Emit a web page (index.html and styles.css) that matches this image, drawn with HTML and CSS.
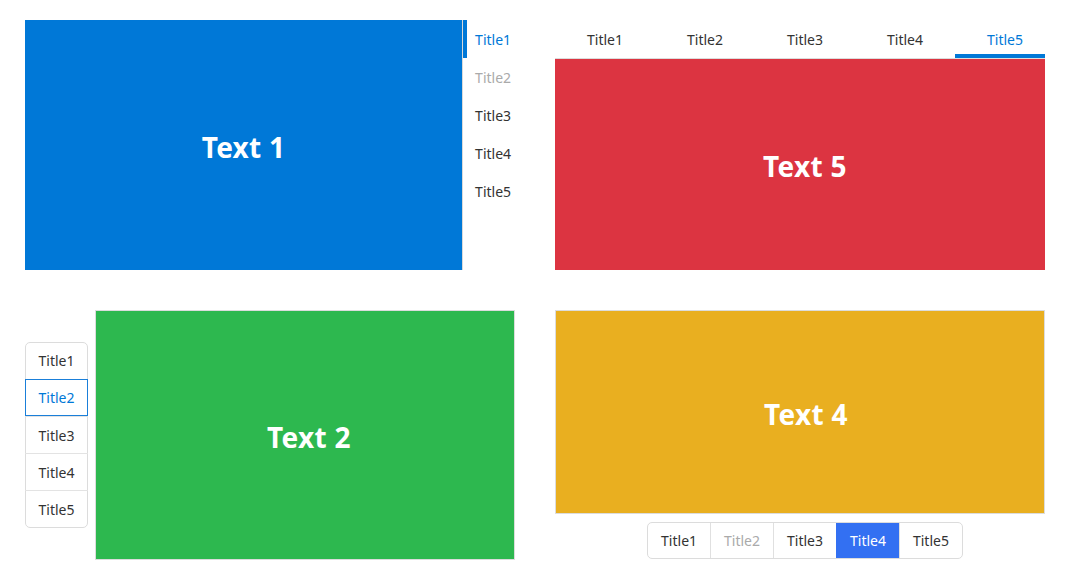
FILE: index.html
```html
<!DOCTYPE html>
<html>
<head>
<meta charset="utf-8">
<link rel="stylesheet" href="styles.css">
</head>
<body>
<div class="grid">
  <section class="cell side-right">
    <div class="pane blue"><div class="inner"><span class="big">Text 1</span></div></div>
    <div class="vtabs">
      <div class="vtab active">Title1</div>
      <div class="vtab disabled">Title2</div>
      <div class="vtab">Title3</div>
      <div class="vtab">Title4</div>
      <div class="vtab">Title5</div>
    </div>
  </section>
  <section class="cell top-tabs">
    <div class="htabs">
      <div class="htab">Title1</div>
      <div class="htab">Title2</div>
      <div class="htab">Title3</div>
      <div class="htab">Title4</div>
      <div class="htab active">Title5</div>
    </div>
    <div class="pane red"><div class="inner wide"><span class="big">Text 5</span></div></div>
  </section>
  <section class="cell side-left">
    <div class="vseg">
      <div class="vseg-item">Title1</div>
      <div class="vseg-item active">Title2</div>
      <div class="vseg-item">Title3</div>
      <div class="vseg-item">Title4</div>
      <div class="vseg-item">Title5</div>
    </div>
    <div class="pane green bordered"><div class="inner shifted"><span class="big">Text 2</span></div></div>
  </section>
  <section class="cell bottom-seg">
    <div class="pane yellow bordered"><div class="inner wide"><span class="big">Text 4</span></div></div>
    <div class="hseg-wrap">
      <div class="hseg">
        <div class="hseg-item">Title1</div>
        <div class="hseg-item disabled">Title2</div>
        <div class="hseg-item">Title3</div>
        <div class="hseg-item active">Title4</div>
        <div class="hseg-item">Title5</div>
      </div>
    </div>
  </section>
</div>
</body>
</html>
```
FILE: styles.css
```css
html, body {
  margin: 0;
  padding: 0;
  background: #fff;
}
body {
  font-family: "Noto Sans", "Open Sans", sans-serif;
  font-size: 14px;
  color: #333;
}
.grid {
  display: grid;
  grid-template-columns: 490px 490px;
  grid-template-rows: 250px 250px;
  column-gap: 40px;
  row-gap: 40px;
  padding: 20px 0 0 25px;
}
.cell {
  overflow: hidden;
  display: flex;
}
.pane {
  overflow: hidden;
  display: flex;
  box-sizing: border-box;
}
.inner {
  flex: 1 0 auto;
  display: flex;
  align-items: center;
  justify-content: center;
  padding-top: 3px;
  box-sizing: border-box;
}
.inner.wide {
  width: 500px;
  flex: 0 0 500px;
}
.inner.shifted {
  padding-left: 8px;
}
.big {
  color: #fff;
  font-weight: 700;
  font-size: 28px;
  letter-spacing: 0.3px;
}
.blue { background: #0078d7; }
.red { background: #dc3441; }
.green { background: #2db84f; }
.yellow { background: #e9af20; }
.bordered { border: 1px solid #dcdcdc; }

/* panel 1 */
.side-right { flex-direction: row; }
.side-right .pane { width: 438px; height: 250px; }
.vtabs {
  width: 52px;
  border-left: 1px solid #d9d9d9;
  display: flex;
  flex-direction: column;
}
.vtab {
  height: 38px;
  line-height: 40px;
  padding-left: 12px;
  white-space: nowrap;
}
.vtab.active {
  color: #0078d7;
  border-left: 4px solid #0078d7;
  padding-left: 8px;
}
.vtab.disabled { color: #aaa; }

/* panel 5 */
.top-tabs { flex-direction: column; }
.htabs {
  display: flex;
  height: 38px;
  border-bottom: 1px solid #dcdcdc;
  flex: 0 0 auto;
}
.htab {
  flex: 0 0 100px;
  text-align: center;
  line-height: 40px;
  box-sizing: border-box;
  height: 38px;
}
.htab.active {
  color: #0078d7;
  border-bottom: 4px solid #0078d7;
}
.top-tabs .pane { flex: 1; }

/* panel 2 */
.side-left { flex-direction: row; align-items: center; gap: 7px; }
.side-left .pane { width: 420px; height: 250px; }
.vseg {
  width: 63px;
  border: 1px solid #dcdcdc;
  border-radius: 5px;
  box-sizing: border-box;
  display: flex;
  flex-direction: column;
}
.vseg-item {
  height: 37px;
  line-height: 37px;
  text-align: center;
  border-top: 1px solid #e3e3e3;
  box-sizing: border-box;
  margin: 0 -1px;
}
.vseg-item:first-child { border-top: none; line-height: 36px; height: 36px; }
.vseg-item.active {
  color: #0078d7;
  border: 1px solid #1a7fd9;
  line-height: 35px;
}

/* panel 4 */
.bottom-seg { flex-direction: column; }
.bottom-seg .pane { height: 204px; flex: 0 0 auto; }
.hseg-wrap {
  width: 500px;
  display: flex;
  justify-content: center;
  padding-top: 8px;
}
.hseg {
  display: flex;
  border: 1px solid #dcdcdc;
  border-radius: 5px;
  height: 37px;
  box-sizing: border-box;
  overflow: hidden;
}
.hseg-item {
  padding: 0 13px;
  line-height: 36px;
  border-left: 1px solid #e0e0e0;
}
.hseg-item:first-child { border-left: none; }
.hseg-item.disabled { color: #aaa; }
.hseg-item.active {
  background: #3370f2;
  color: #fff;
  border-left-color: #3370f2;
}
```
